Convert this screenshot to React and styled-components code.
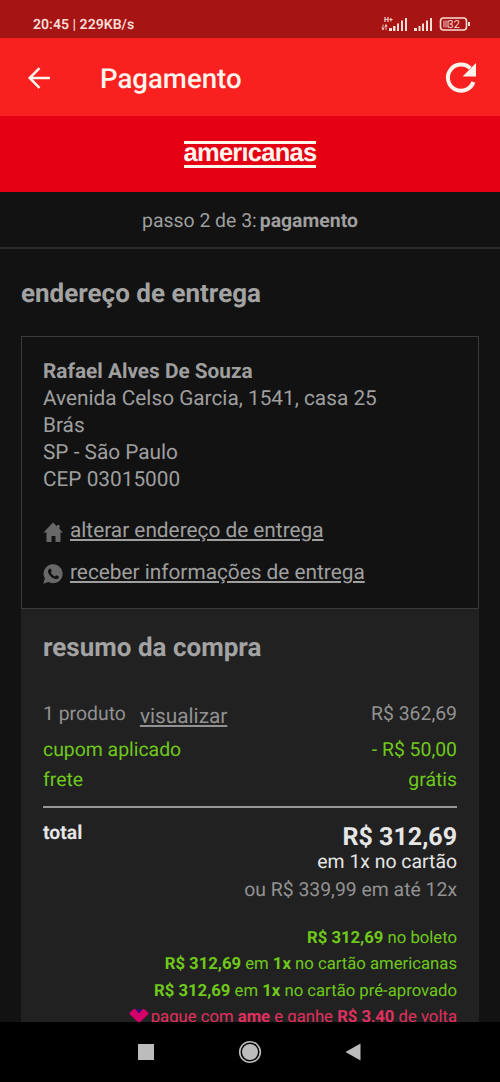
import React from 'react'
import styled, { createGlobalStyle } from 'styled-components'

const GlobalStyle = createGlobalStyle`
  * {
    box-sizing: border-box;
  }

  body {
    background-color: #121212;
    font-family: Roboto, sans-serif;
    margin: 0;
    text-rendering: geometricPrecision;
  }
`

const Screen = styled.div`
  background-color: #121212;
  color: #9f9f9f;
  display: flex;
  flex-direction: column;
  height: 1082px;
  overflow: hidden;
  width: 500px;
`

const StatusBar = styled.div`
  align-items: center;
  background-color: #a61414;
  color: #fbdcd4;
  display: flex;
  flex: none;
  height: 38px;
  justify-content: space-between;
  padding: 10px 29px 0 33px;
`

const StatusText = styled.span`
  font-size: 14.1px;
  font-weight: 600;
  line-height: 18px;
  margin-top: 2px;
  white-space: pre;
`

const AppBar = styled.header`
  align-items: center;
  background-color: #f92020;
  color: #fff4ec;
  display: flex;
  flex: none;
  height: 78px;
  padding: 1px 22px 0 27px;
`

const AppTitle = styled.h1`
  flex: 1;
  font-size: 27.6px;
  font-weight: 500;
  line-height: 34px;
  margin: 3px 0 0 48px;
`

const Brand = styled.div`
  align-items: center;
  background-color: #e60014;
  display: flex;
  flex: none;
  height: 76px;
  justify-content: center;
`

const Logo = styled.div`
  border-bottom: 3px solid #fff4ec;
  border-top: 3px solid #fff4ec;
  color: #fff4ec;
  display: flex;
  font-family: 'Liberation Sans', sans-serif;
  font-size: 25.5px;
  font-weight: 700;
  height: 27px;
  justify-content: center;
  letter-spacing: -0.75px;
  line-height: 18.5px;
  white-space: nowrap;
  width: 132px;
`

const Step = styled.div`
  border-bottom: 2px solid #2b2b2b;
  flex: none;
  font-size: 19.4px;
  height: 57px;
  line-height: 57px;
  text-align: center;
  white-space: nowrap;

  b {
    margin-left: 3px;
  }
`

const Content = styled.main`
  display: flex;
  flex: 1;
  flex-direction: column;
  min-height: 0;
  overflow: hidden;
  padding: 0 21px;
`

const Heading = styled.h2`
  color: #a3a3a3;
  font-size: 26px;
  font-weight: 700;
  line-height: 30px;
  margin: 0;
`

const SectionHeading = styled(Heading)`
  margin: 30px 0 27px;
`

const AddressCard = styled.section`
  border: 1px solid #3a3a3a;
  flex: none;
  height: 273px;
  padding: 22px 21px 0;
`

const Address = styled.address`
  font-size: 20.8px;
  font-style: normal;
  line-height: 27px;
`

const LinkRow = styled.div`
  align-items: center;
  display: flex;
  height: 42px;
  gap: 7px;
`

const Links = styled.div`
  margin-top: 17px;
`

const TextLink = styled.a`
  font-size: 20.8px;
  line-height: 26px;
  margin-top: -2px;
  text-decoration: underline;
  text-decoration-thickness: 1.5px;
  text-underline-offset: 2px;
  white-space: nowrap;
`

const Summary = styled.section`
  background-color: #212121;
  flex: none;
  height: 460px;
  padding: 24px 22px 0;
`

const Row = styled.div`
  color: ${props => props.$green ? '#6fc91b' : '#929292'};
  display: flex;
  font-size: 19.4px;
  height: ${props => props.$height}px;
  justify-content: space-between;
  line-height: 30px;
`

const Products = styled.div`
  align-items: flex-start;
  display: flex;
  gap: 14px;
`

const ViewLink = styled(TextLink)`
  line-height: 30px;
  margin-top: 3px;
`

const Rows = styled.div`
  border-bottom: 2px solid #989898;
  margin-top: 36px;
  padding-bottom: 11px;
`

const TotalRow = styled.div`
  color: #e6e6e6;
  display: flex;
  font-size: 19.4px;
  justify-content: space-between;
  padding-top: 13px;
`

const TotalLabel = styled.b`
  line-height: 24px;
`

const Prices = styled.div`
  padding-top: 2px;
  text-align: right;
`

const Price = styled.div`
  font-size: 25px;
  font-weight: 700;
  line-height: 30px;
`

const PriceNote = styled.div`
  font-size: 19.4px;
  line-height: 17px;
`

const Installments = styled(PriceNote)`
  color: #929292;
  line-height: 30px;
  margin-top: 5px;
`

const Offers = styled.div`
  margin-top: 20.5px;
`

const Offer = styled.div`
  align-items: center;
  color: ${props => props.$ame ? '#e0305f' : '#6fc91b'};
  display: flex;
  font-size: 16.7px;
  height: 26.3px;
  justify-content: flex-end;
  white-space: pre;
`

const NavBar = styled.nav`
  align-items: center;
  background-color: #000;
  display: flex;
  flex: none;
  height: 60px;
  justify-content: space-between;
  padding: 0 139px 0 137px;
`

const BackIcon = () => (
  <svg width="25" height="24" viewBox="0 0 25 24" fill="none" stroke="#fff4ec" strokeWidth="2.5">
    <path d="M23 12H3M12.5 2.2L2.7 12l9.8 9.8" />
  </svg>
)

const ReloadIcon = () => (
  <svg width="34" height="34" viewBox="0 0 34 34">
    <path d="M26.3 7.4A13.1 13.1 0 1 0 29.4 21" fill="none" stroke="#fff4ec" strokeWidth="4" />
    <path d="M32 2v13.4H18.6z" fill="#fff4ec" />
  </svg>
)

const PhoneStatus = () => (
  <svg width="91" height="18" viewBox="0 0 91 18" fill="#fbdcd4">
    <text x="4" y="7" fontSize="7" fontWeight="700" fontFamily="Roboto, sans-serif">H+</text>
    <path d="M3 9.5v5M1.8 12.5L3 15l1.2-2.5M6 15v-5M4.8 12L6 9.5 7.2 12" fill="none" stroke="#fbdcd4" strokeWidth=".8" />
    <path d="M9 13h3v3H9zM13 11h2.500v5H13zM17 8.500h2v7.500h-2zM21 5.500h2V16h-2zM25 3h2v13h-2z" />
    <path d="M34 13h3v3h-3zM38.500 11h2v5h-2zM42 8.500h2v7.500h-2zM46 5.500h2V16h-2zM50 3h2v13h-2z" />
    <rect x="60.5" y="3" width="26" height="12" rx="3" fill="none" stroke="#fbdcd4" strokeWidth="1.6" />
    <path d="M63 5.5h6v7h-6z" opacity=".45" />
    <path d="M88 7h2v4h-2z" />
    <text x="67.5" y="13" fontSize="11" fontFamily="Roboto, sans-serif">32</text>
  </svg>
)

const HomeIcon = () => (
  <svg width="20" height="20" viewBox="0 0 20 20" fill="#686868">
    <path d="M10 .5L14 4.5V3h2.500V7L20 10.500h-2.500V20h-5v-6h-4v6h-5v-9.500H.5z" />
  </svg>
)

const WhatsIcon = () => (
  <svg width="20" height="20" viewBox="0 0 20 20">
    <path d="M10.200 .3a9.500 9.500 0 1 1-4.700 17.800L.2 19.700l1.700-5.100A9.500 9.500 0 0 1 10.200.3z" fill="#686868" />
    <path d="M6.500 4.700c.5-.4 1.100-.2 1.300.2l.9 2c.2.500-.7 1.200-.9 1.600.9 1.900 2.200 3.100 4.200 4 .5-.1 1.100-1.300 1.600-1.200l2 1c.7.4.1 1.700-.4 2.100-1.100.9-2.300.8-3.700.3-3.200-1.200-5.200-3.300-6.400-6.200-.5-1.500.3-3.100 1.400-3.800z" fill="#121212" />
  </svg>
)

const Heart = styled.svg`
  flex: none;
  margin: -3px 2px 0 0;
`

const HeartIcon = () => (
  <Heart width="20" height="16" viewBox="0 0 20 16">
    <path d="M10 15L.9 6.500Q0 5.500.9 4.500L4.500 1.200Q5.500.5 6.500 1.200L10 4l3.500-2.800q1-.7 2 0l3.600 3.300q.9 1 0 2z" fill="#d4006a" />
    <path d="M6.300 1.200h7.400L10 5.500z" fill="#30106f" />
  </Heart>
)

const App = () => {
  return (
    <Screen>
      <GlobalStyle />
      <StatusBar>
        <StatusText>20:45 | 229KB/s</StatusText>
        <PhoneStatus />
      </StatusBar>
      <AppBar>
        <BackIcon />
        <AppTitle>Pagamento</AppTitle>
        <ReloadIcon />
      </AppBar>
      <Brand>
        <Logo>amerıcanas</Logo>
      </Brand>
      <Step>passo 2 de 3:<b>pagamento</b></Step>
      <Content>
        <SectionHeading>endereço de entrega</SectionHeading>
        <AddressCard>
          <Address>
            <b>Rafael Alves De Souza</b>
            <div>Avenida Celso Garcia, 1541, casa 25</div>
            <div>Brás</div>
            <div>SP - São Paulo</div>
            <div>CEP 03015000</div>
          </Address>
          <Links>
            <LinkRow>
              <HomeIcon />
              <TextLink>alterar endereço de entrega</TextLink>
            </LinkRow>
            <LinkRow>
              <WhatsIcon />
              <TextLink>receber informações de entrega</TextLink>
            </LinkRow>
          </Links>
        </AddressCard>
        <Summary>
          <Heading>resumo da compra</Heading>
          <Rows>
            <Row $height={36}>
              <Products>
                <span>1 produto</span>
                <ViewLink>visualizar</ViewLink>
              </Products>
              <span>R$ 362,69</span>
            </Row>
            <Row $green $height={30}>
              <span>cupom aplicado</span>
              <span>- R$ 50,00</span>
            </Row>
            <Row $green $height={30}>
              <span>frete</span>
              <span>grátis</span>
            </Row>
          </Rows>
          <TotalRow>
            <TotalLabel>total</TotalLabel>
            <Prices>
              <Price>R$ 312,69</Price>
              <PriceNote>em 1x no cartão</PriceNote>
              <Installments>ou R$ 339,99 em até 12x</Installments>
            </Prices>
          </TotalRow>
          <Offers>
            <Offer><b>R$ 312,69</b> no boleto</Offer>
            <Offer><b>R$ 312,69</b> em <b>1x</b> no cartão americanas</Offer>
            <Offer><b>R$ 312,69</b> em <b>1x</b> no cartão pré-aprovado</Offer>
            <Offer $ame><HeartIcon />pague com <b>ame</b> e ganhe <b>R$ 3,40</b> de volta</Offer>
          </Offers>
        </Summary>
      </Content>
      <NavBar>
        <svg width="17" height="16" viewBox="0 0 17 16">
          <path d="M1 0h16v16H1z" fill="#bcbcbc" />
        </svg>
        <svg width="24" height="24" viewBox="0 0 24 24">
          <circle cx="12" cy="12" r="10.3" fill="none" stroke="#bcbcbc" strokeWidth="1.6" />
          <circle cx="12" cy="12" r="8" fill="#bcbcbc" />
        </svg>
        <svg width="16" height="18" viewBox="0 0 16 18">
          <path d="M15.5 .5v17L.5 9z" fill="#bcbcbc" />
        </svg>
      </NavBar>
    </Screen>
  )
}

export default App
